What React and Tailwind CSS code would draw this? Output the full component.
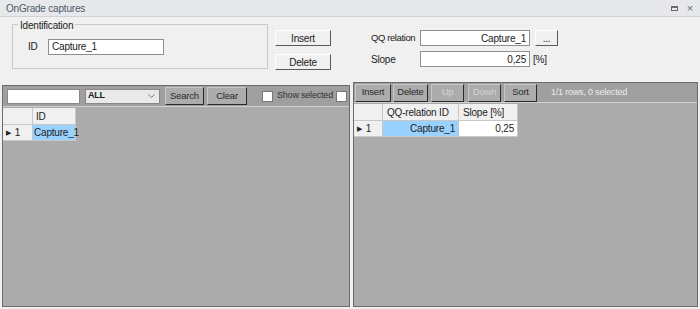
import React from 'react'

const font = { fontFamily: '"Liberation Sans", Arial, sans-serif' }

function Btn({ children, className = '' }) {
  return (
    <button className={`h-[16px] border border-t-white border-l-white border-r-[#5a5a5a] border-b-[#5a5a5a] bg-[#f0f0f0] text-[10px] text-[#222] flex items-center justify-center ${className}`}>
      {children}
    </button>
  )
}

function ToolBtn({ children, disabled, className = '' }) {
  return (
    <button className={`h-[18px] border border-t-[#c8c8c8] border-l-[#c8c8c8] border-r-[#2a2a2a] border-b-[#2a2a2a] bg-[#acacac] text-[9.5px] whitespace-nowrap flex items-center justify-center ${disabled ? 'text-[#d4d4d4]' : 'text-[#2a2a2a]'} ${className}`}>
      {children}
    </button>
  )
}

function Check({ className = '' }) {
  return <span className={`inline-block shrink-0 w-[11px] h-[11px] bg-white border border-[#777] ${className}`} />
}

export default function App() {
  return (
    <div style={font} className="w-[700px] h-[309px] bg-[#f0f0f0] flex flex-col overflow-hidden text-[10px] tracking-[-0.2px] text-[#222] whitespace-nowrap">
      {/* title bar */}
      <div className="h-[17px] shrink-0 bg-[#e6e8ec] border-b border-[#cfd2d6] flex items-center pl-[6px] pr-[7px]">
        <span className="text-[#505a68] text-[10px]">OnGrade captures</span>
        <div className="ml-auto flex items-center gap-[9px]">
          <span className="w-[7px] h-[5px] border border-[#6a6a6a] border-t-2" />
          <span className="text-[#6a6a6a] text-[11px] leading-none">×</span>
        </div>
      </div>

      {/* header form */}
      <div className="h-[64px] shrink-0 flex">
        <div className="ml-[12px] mt-[7px] w-[256px] h-[45px] border border-[#c9c9c9] relative flex items-center">
          <span className="absolute left-[5px] top-[-7px] px-[2px] bg-[#f0f0f0]">Identification</span>
          <span className="ml-[15px] w-[20px]">ID</span>
          <div className="w-[116px] h-[16px] bg-white border border-[#8f8f8f] pl-[3px] flex items-center">Capture_1</div>
        </div>
        <div className="ml-[7px] pt-[13px] flex flex-col gap-[8px]">
          <Btn className="w-[56px]">Insert</Btn>
          <Btn className="w-[56px]">Delete</Btn>
        </div>
        <div className="ml-[40px] pt-[13px] flex flex-col gap-[5px]">
          <div className="flex items-center h-[16px]">
            <span className="w-[49px] text-[9.5px] tracking-[-0.4px]">QQ relation</span>
            <div className="w-[110px] h-[16px] bg-white border border-[#8f8f8f] pr-[3px] flex items-center justify-end">Capture_1</div>
            <Btn className="ml-[5px] w-[23px]">...</Btn>
          </div>
          <div className="flex items-center h-[16px]">
            <span className="w-[49px]">Slope</span>
            <div className="w-[110px] h-[16px] bg-white border border-[#8f8f8f] pr-[3px] flex items-center justify-end">0,25</div>
            <span className="ml-[3px]">[%]</span>
          </div>
        </div>
      </div>

      {/* panels */}
      <div className="flex-1 flex items-end pl-[2px] gap-[3px] pb-[2px]">
        {/* left */}
        <div className="w-[348px] h-[222px] flex flex-col border border-[#6b6b6b] bg-[#ababab]">
          <div className="h-[21px] shrink-0 bg-[#9f9f9f] border-b border-[#d0d0d0] flex items-center pl-[4px]">
            <div className="w-[73px] h-[15px] bg-white border border-[#888]" />
            <div className="ml-[5px] w-[75px] h-[15px] bg-[#e9e9e9] border border-[#888] flex items-center pl-[2px] text-[9px] font-bold">
              ALL
              <svg className="ml-auto mr-[4px]" width="7" height="4" viewBox="0 0 7 4"><path d="M0.5 0.5 L3.5 3.5 L6.5 0.5" fill="none" stroke="#777" strokeWidth="1" /></svg>
            </div>
            <ToolBtn className="ml-[5px] w-[39px]">Search</ToolBtn>
            <ToolBtn className="ml-[3px] w-[40px]">Clear</ToolBtn>
            <Check className="ml-[15px]" />
            <span className="ml-[4px] text-[9px] text-[#333]">Show selected</span>
            <Check className="ml-auto mr-[2px]" />
          </div>
          <div className="flex-1 pt-[1px]">
            <div className="flex h-[17px]">
              <div className="w-[30px] bg-[#f0f0f0] border-r border-b border-[#c8c8c8]" />
              <div className="w-[43px] bg-[#f0f0f0] border-r border-b border-[#c8c8c8] flex items-center pl-[3px]">ID</div>
            </div>
            <div className="flex h-[16px]">
              <div className="w-[30px] bg-[#f0f0f0] border-r border-b border-[#c8c8c8] flex items-center pl-[3px] gap-[4px]">
                <span className="text-[7px] leading-none">▶</span>1
              </div>
              <div className="w-[43px] bg-[#99d1ff] border-r border-b border-[#c8c8c8] flex items-center pl-[1px]">Capture_1</div>
            </div>
          </div>
        </div>

        {/* right */}
        <div className="w-[345px] h-[225px] flex flex-col border border-[#6b6b6b] bg-[#ababab]">
          <div className="h-[20px] shrink-0 bg-[#9f9f9f] border-b border-[#d0d0d0] flex items-center pl-[1px]">
            <ToolBtn className="w-[36px]">Insert</ToolBtn>
            <ToolBtn className="ml-[2px] w-[35px]">Delete</ToolBtn>
            <ToolBtn disabled className="ml-[3px] w-[33px]">Up</ToolBtn>
            <ToolBtn disabled className="ml-[4px] w-[33px]">Down</ToolBtn>
            <ToolBtn className="ml-[3px] w-[33px]">Sort</ToolBtn>
            <span className="ml-[14px] text-[9px] text-[#ececec]">1/1 rows, 0 selected</span>
          </div>
          <div className="flex-1 pt-[1px]">
            <div className="flex h-[17px]">
              <div className="w-[29px] bg-[#f0f0f0] border-r border-b border-[#c8c8c8]" />
              <div className="w-[76px] bg-[#f0f0f0] border-r border-b border-[#c8c8c8] flex items-center pl-[4px]">QQ-relation ID</div>
              <div className="w-[59px] bg-[#f0f0f0] border-r border-b border-[#c8c8c8] flex items-center pl-[4px]">Slope [%]</div>
            </div>
            <div className="flex h-[16px]">
              <div className="w-[29px] bg-[#f0f0f0] border-r border-b border-[#c8c8c8] flex items-center pl-[3px] gap-[4px]">
                <span className="text-[7px] leading-none">▶</span>1
              </div>
              <div className="w-[76px] bg-[#99d1ff] border-r border-b border-[#c8c8c8] flex items-center justify-end pr-[3px]">Capture_1</div>
              <div className="w-[59px] bg-white border-r border-b border-[#c8c8c8] flex items-center justify-end pr-[3px]">0,25</div>
            </div>
          </div>
        </div>
      </div>
    </div>
  )
}
